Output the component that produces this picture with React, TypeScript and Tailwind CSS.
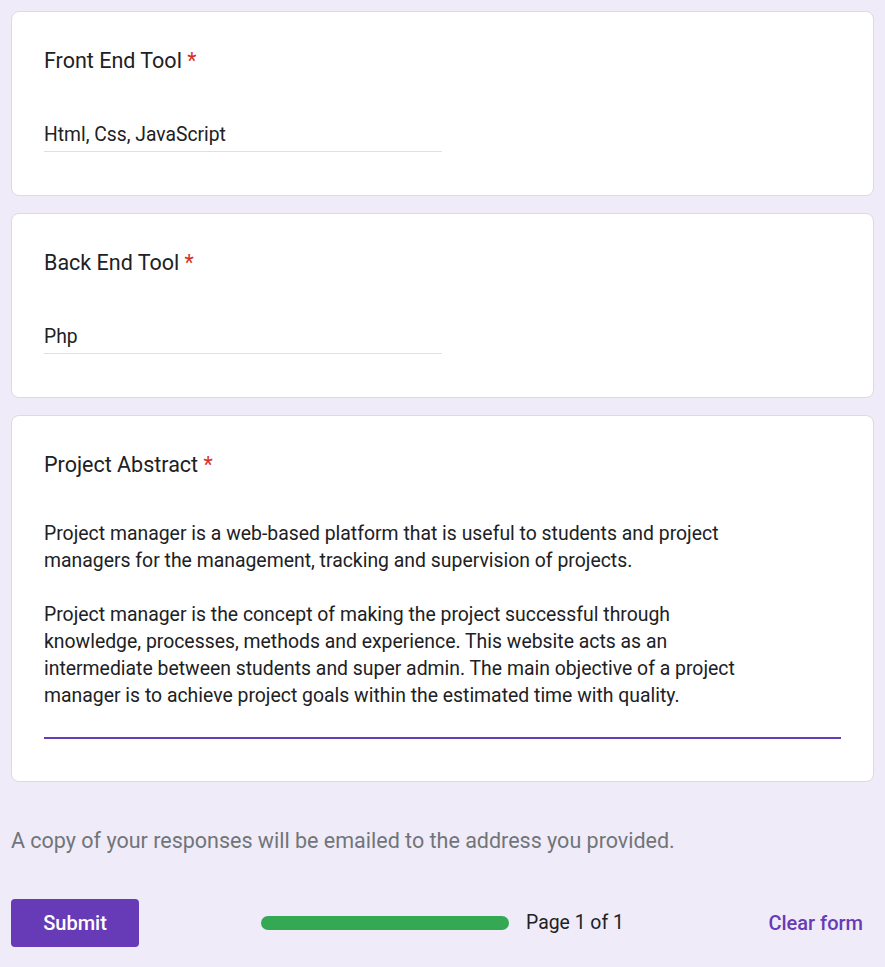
import React from 'react';

const font = { fontFamily: 'Roboto, "Noto Sans", sans-serif' };

const Question: React.FC<{ title: string; children: React.ReactNode; className?: string }> = ({ title, children, className }) => (
  <div className={`bg-white border border-[#dadce0] rounded-lg px-8 ${className ?? ''}`}>
    <h2 className="text-[21.5px] leading-6 text-[#202124]">
      {title} <span className="text-[#d93025]">*</span>
    </h2>
    {children}
  </div>
);

const App: React.FC = () => {
  return (
    <div className="min-h-[967px] bg-[#f0ebf8] px-[11px] pt-[11px] pb-5 flex flex-col" style={font}>
      <div className="flex flex-col gap-[17px]">
        <Question title="Front End Tool" className="pt-[37px] pb-[43px]">
          <div className="mt-[50px] w-[398px] border-b border-[#e0e0e0] pb-[4px] text-[19.3px] leading-6 text-[#202124]">
            Html, Css, JavaScript
          </div>
        </Question>

        <Question title="Back End Tool" className="pt-[37px] pb-[43px]">
          <div className="mt-[50px] w-[398px] border-b border-[#e0e0e0] pb-[4px] text-[19.3px] leading-6 text-[#202124]">
            Php
          </div>
        </Question>

        <Question title="Project Abstract" className="pt-[37px] pb-[42px]">
          <div className="mt-[43px] border-b-2 border-[#673ab7] pb-[28px] text-[19.4px] leading-[27px] text-[#202124]">
            <p>
              Project manager is a web-based platform that is useful to students and project
              <br />
              managers for the management, tracking and supervision of projects.
            </p>
            <p className="mt-[27px]">
              Project manager is the concept of making the project successful through
              <br />
              knowledge, processes, methods and experience. This website acts as an
              <br />
              intermediate between students and super admin. The main objective of a project
              <br />
              manager is to achieve project goals within the estimated time with quality.
            </p>
          </div>
        </Question>
      </div>

      <p className="mt-[47px] text-[21.5px] leading-6 text-[#70757a]">
        A copy of your responses will be emailed to the address you provided.
      </p>

      <div className="mt-[46px] flex items-center">
        <button className="w-[128px] h-[48px] rounded bg-[#673ab7] text-white text-[20px] font-medium">
          Submit
        </button>
        <div className="ml-[122px] flex items-center">
          <div className="w-[248px] h-[14px] rounded-full bg-[#34a853]" />
          <span className="ml-[17px] text-[19.4px] text-[#202124]">Page 1 of 1</span>
        </div>
        <button className="ml-auto mr-[11px] text-[20px] font-medium text-[#673ab7]">Clear form</button>
      </div>
    </div>
  );
};

export default App;
